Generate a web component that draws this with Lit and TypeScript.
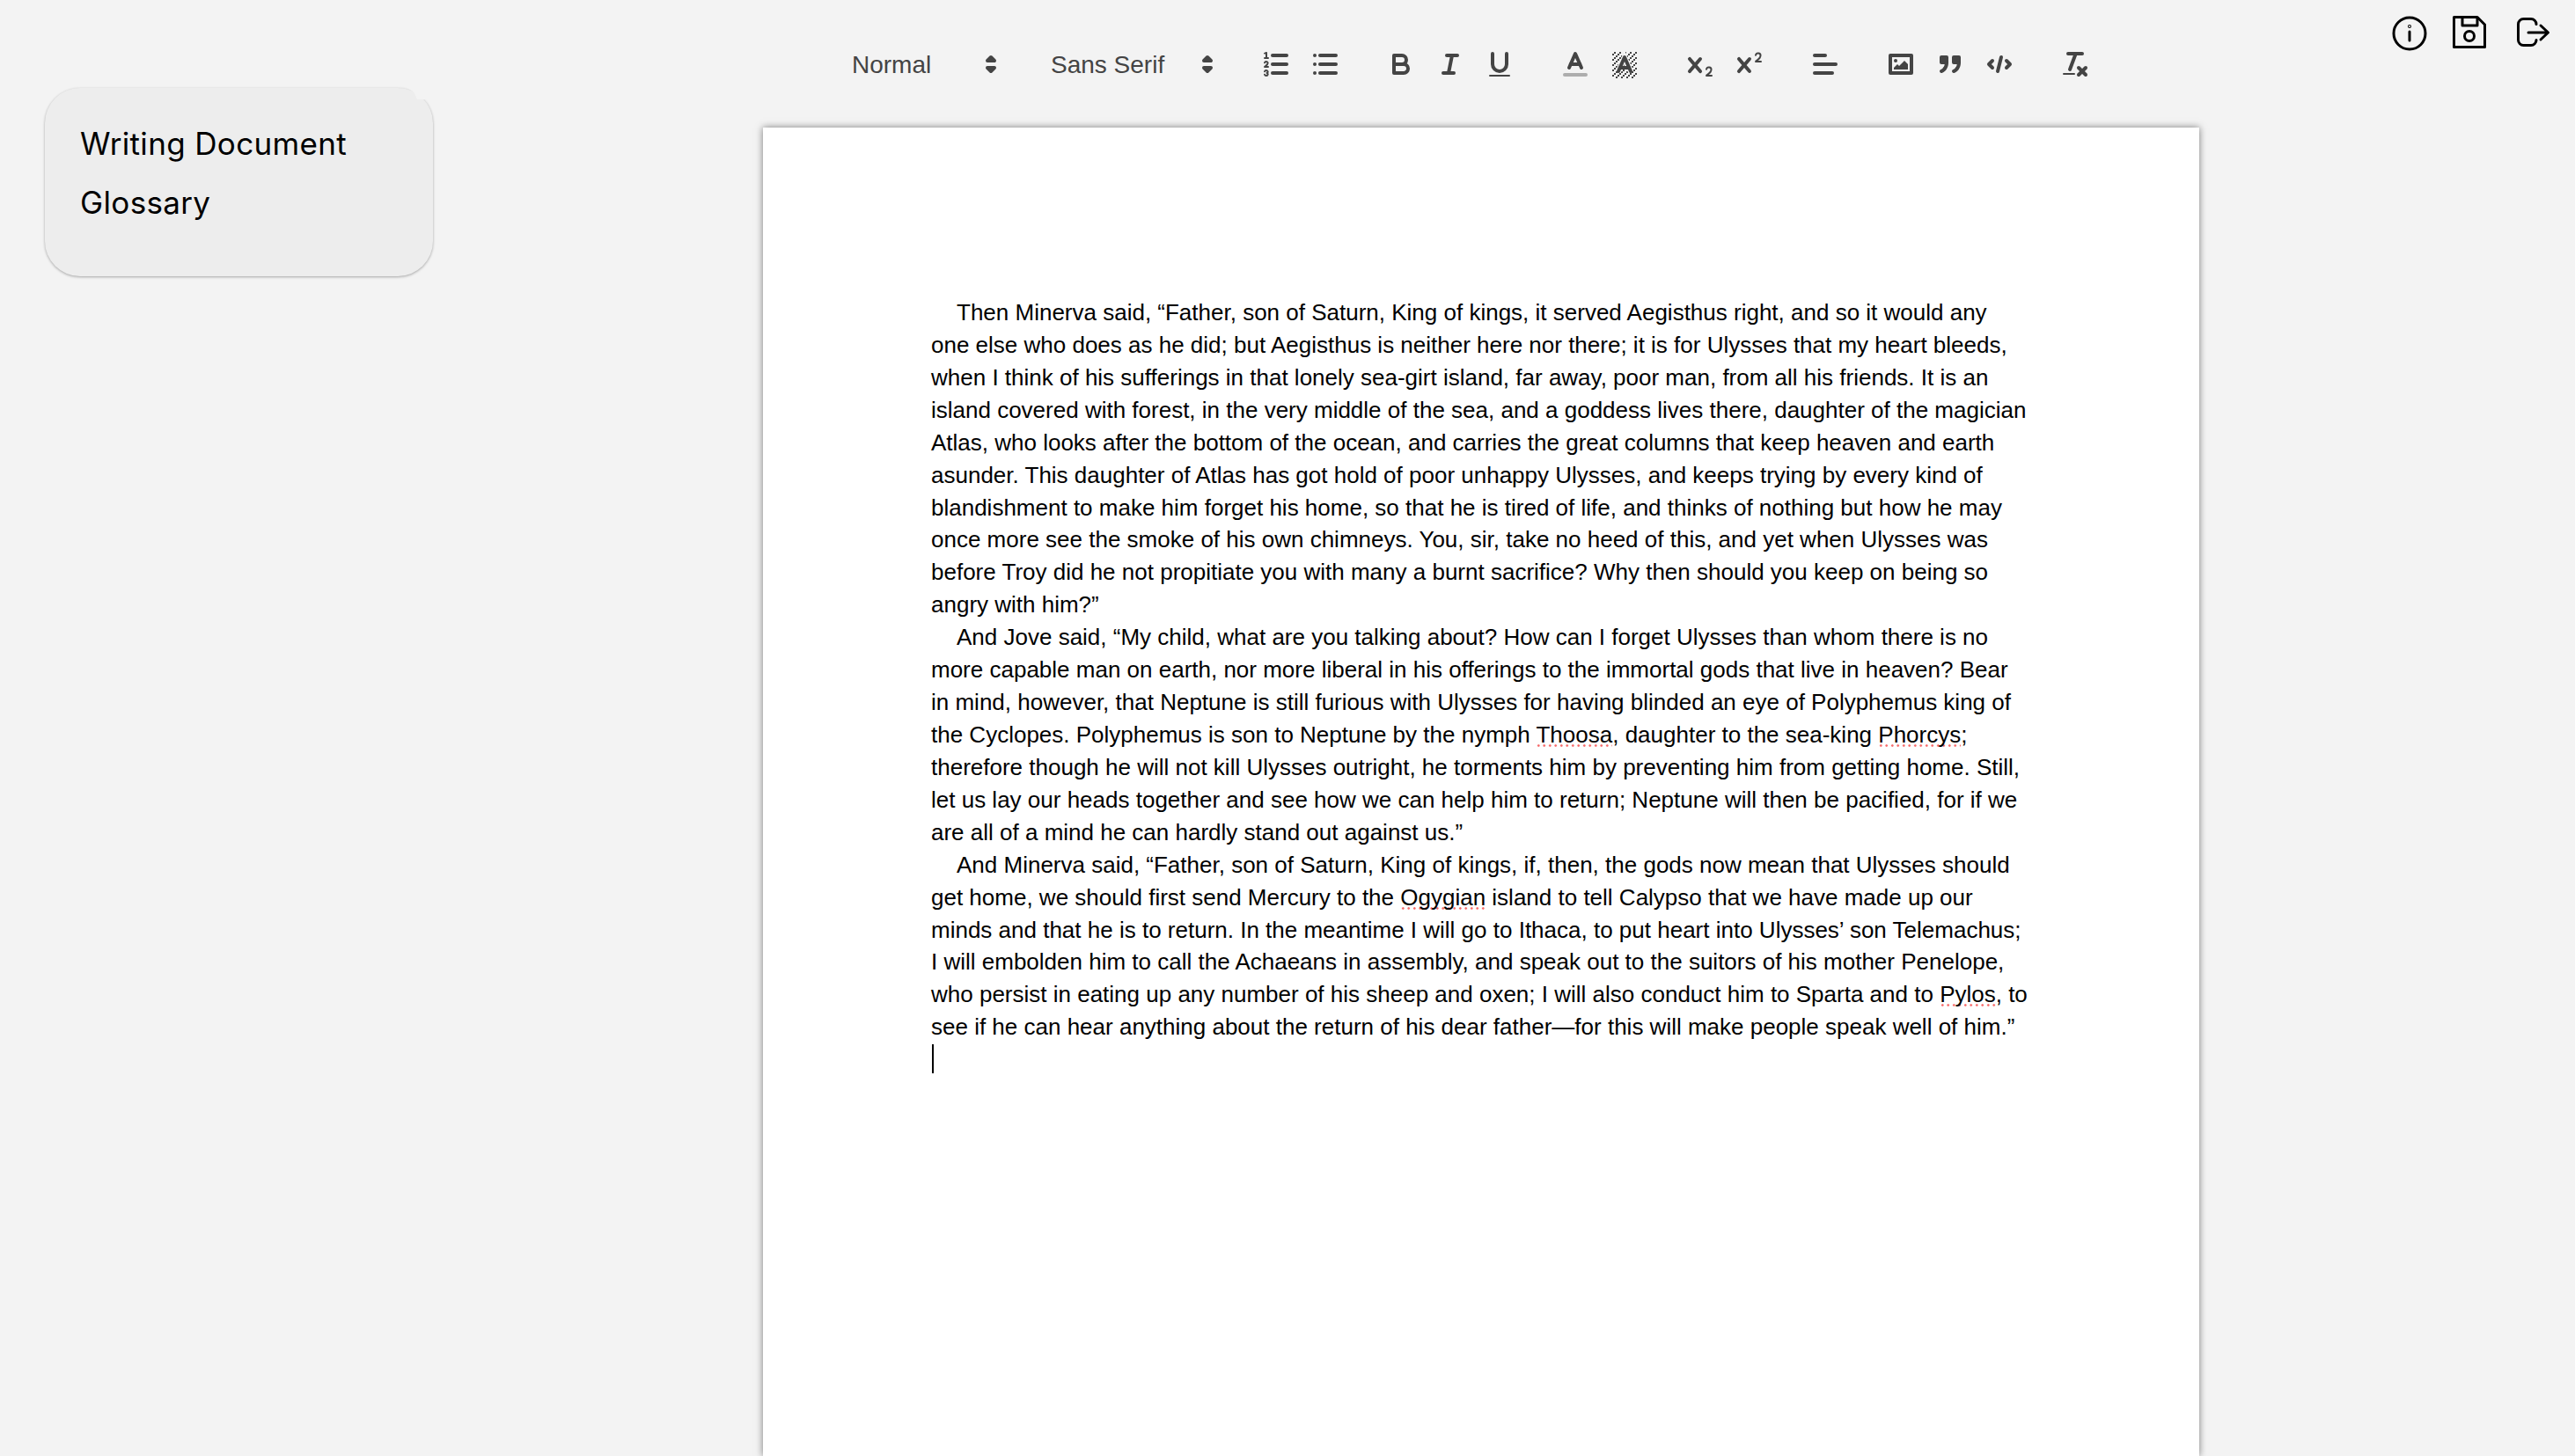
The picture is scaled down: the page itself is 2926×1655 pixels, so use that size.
import { LitElement, html, css, svg } from "lit";
import { customElement } from "lit/decorators.js";

const hatch = () => {
  const cells = [];
  for (let x = 2; x < 16; x++) for (let y = 2; y < 17; y++) {
    if ((x + y) % 3 === 2) cells.push(svg`<rect class="f" x=${x} y=${y} width="1" height="1"></rect>`);
  }
  return cells;
};

const icons: Record<string, unknown> = {
  ol: svg`<line class="s" x1="7" x2="15" y1="4" y2="4"/><line class="s" x1="7" x2="15" y1="9" y2="9"/><line class="s" x1="7" x2="15" y1="14" y2="14"/><line class="s t" x1="2.5" x2="4.5" y1="5.5" y2="5.5"/><path class="f" d="M3.5,6A0.5,0.5,0,0,1,3,5.5V3.085l-0.276.138A0.5,0.5,0,0,1,2.053,3c-0.124-.247-0.023-0.324.224-0.447l1-.5A0.5,0.5,0,0,1,4,2.5v3A0.5,0.5,0,0,1,3.5,6Z"/><path class="s t" d="M4.5,10.5h-2c0-.234,1.85-1.076,1.85-2.234A0.959,0.959,0,0,0,2.5,8.156"/><path class="s t" d="M2.5,14.846a0.959,0.959,0,0,0,1.85-.109A0.7,0.7,0,0,0,3.75,14a0.688,0.688,0,0,0,.6-0.736,0.959,0.959,0,0,0-1.85-.109"/>`,
  ul: svg`<line class="s" x1="6" x2="15" y1="4" y2="4"/><line class="s" x1="6" x2="15" y1="9" y2="9"/><line class="s" x1="6" x2="15" y1="14" y2="14"/><line class="s" x1="3" x2="3" y1="4" y2="4"/><line class="s" x1="3" x2="3" y1="9" y2="9"/><line class="s" x1="3" x2="3" y1="14" y2="14"/>`,
  bold: svg`<path class="s" d="M5,4H9.5A2.5,2.5,0,0,1,12,6.5v0A2.5,2.5,0,0,1,9.5,9H5A0,0,0,0,1,5,9V4A0,0,0,0,1,5,4Z"/><path class="s" d="M5,9h5.5A2.5,2.5,0,0,1,13,11.5v0A2.5,2.5,0,0,1,10.5,14H5a0,0,0,0,1,0,0V9A0,0,0,0,1,5,9Z"/>`,
  italic: svg`<line class="s" x1="7" x2="13" y1="4" y2="4"/><line class="s" x1="5" x2="11" y1="14" y2="14"/><line class="s" x1="8" x2="10" y1="14" y2="4"/>`,
  underline: svg`<path class="s" d="M5,3V9a4.012,4.012,0,0,0,4,4H9a4.012,4.012,0,0,0,4-4V3"/><rect class="f" height="1" rx=".5" ry=".5" width="12" x="3" y="15"/>`,
  color: svg`<line class="s" opacity=".4" x1="3" x2="15" y1="15" y2="15"/><polyline class="s" points="5.5 11 9 3 12.5 11"/><line class="s" x1="11.63" x2="6.38" y1="9" y2="9"/>`,
  background: svg`${hatch()}<polyline class="halo" points="5.5 13 9 5 12.5 13"/><polyline class="s" points="5.5 13 9 5 12.5 13"/><line class="s" x1="11.63" x2="6.38" y1="11" y2="11"/>`,
  sub: svg`<path class="f" d="M15.5,15H13.861a3.858,3.858,0,0,0,1.914-2.975,1.8,1.8,0,0,0-1.6-1.751A1.921,1.921,0,0,0,12.021,11.7a0.50013,0.50013,0,1,0,.957.291h0a0.914,0.914,0,0,1,1.053-.725,0.81,0.81,0,0,1,.744.762c0,1.076-1.16971,1.86982-1.93971,2.43082A1.45639,1.45639,0,0,0,12,15.5a0.5,0.5,0,0,0,.5.5h3A0.5,0.5,0,0,0,15.5,15Z"/><path class="f" d="M9.65,5.241a1,1,0,0,0-1.409.108L6,7.964,3.759,5.349A1,1,0,0,0,2.192,6.59178Q2.21541,6.6213,2.241,6.649L4.684,9.5,2.241,12.35A1,1,0,0,0,3.71,13.70722q0.02557-.02768.049-0.05722L6,11.036,8.241,13.65a1,1,0,1,0,1.567-1.24277Q9.78459,12.3777,9.759,12.35L7.316,9.5,9.759,6.651A1,1,0,0,0,9.65,5.241Z"/>`,
  sup: svg`<path class="f" d="M15.5,7H13.861a4.015,4.015,0,0,0,1.914-2.975,1.8,1.8,0,0,0-1.6-1.751A1.922,1.922,0,0,0,12.021,3.7a0.5,0.5,0,1,0,.957.291,0.917,0.917,0,0,1,1.053-.725,0.81,0.81,0,0,1,.744.762c0,1.077-1.164,1.925-1.934,2.486A1.423,1.423,0,0,0,12,7.5a0.5,0.5,0,0,0,.5.5h3A0.5,0.5,0,0,0,15.5,7Z"/><path class="f" d="M9.651,5.241a1,1,0,0,0-1.41.108L6,7.964,3.759,5.349a1,1,0,1,0-1.519,1.3L4.683,9.5,2.241,12.35a1,1,0,1,0,1.519,1.3L6,11.036,8.241,13.65a1,1,0,0,0,1.519-1.3L7.317,9.5,9.759,6.651A1,1,0,0,0,9.651,5.241Z"/>`,
  align: svg`<line class="s" x1="3" x2="15" y1="9" y2="9"/><line class="s" x1="3" x2="13" y1="14" y2="14"/><line class="s" x1="3" x2="9" y1="4" y2="4"/>`,
  image: svg`<rect class="s" height="10" width="12" x="3" y="4"/><circle class="f" cx="6" cy="7" r="1"/><polyline class="f" points="5 12 5 11 7 9 8 10 11 7 13 9 13 12 5 12"/>`,
  quote: svg`<rect class="s f" height="3" width="3" x="4" y="5"/><rect class="s f" height="3" width="3" x="11" y="5"/><path class="s f" d="M7,8c0,4.031-3,5-3,5"/><path class="s f" d="M14,8c0,4.031-3,5-3,5"/>`,
  code: svg`<polyline class="s" points="5 7 3 9 5 11"/><polyline class="s" points="13 7 15 9 13 11"/><line class="s" x1="10" x2="8" y1="5" y2="13"/>`,
  clean: svg`<line class="s" x1="5" x2="13" y1="3" y2="3"/><line class="s" x1="6" x2="9.35" y1="12" y2="3"/><line class="s" x1="11" x2="15" y1="11" y2="15"/><line class="s" x1="15" x2="11" y1="11" y2="15"/><rect class="f" height="1" rx=".5" ry=".5" width="7" x="2" y="14"/>`,
};

const arrows = svg`<polygon class="s" points="7 11 9 13 11 11 7 11"/><polygon class="s" points="7 7 9 5 11 7 7 7"/>`;

const groups = [["ol", "ul"], ["bold", "italic", "underline"], ["color", "background"], ["sub", "sup"], ["align"], ["image", "quote", "code"], ["clean"]];

const sq = (w: string) => html`<span class="sq">${w}</span>`;

@customElement("app-root")
export class AppRoot extends LitElement {
  static styles = css`
    :host { display: block; height: 100vh; overflow: hidden; background: #f3f3f3; }
    .app { display: grid; grid-template-columns: 867px 1632px 1fr; height: 100vh; overflow: hidden; }
    .side { padding: 100px 0 0 51px; }
    .card { position: relative; width: 441px; height: 214px; box-sizing: border-box; padding: 30px 0 0 40px; background: #ededed; border-radius: 40px; box-shadow: 0 1px 3px rgba(0,0,0,.32); font: 400 35px/67px Inter, sans-serif; color: #000; letter-spacing: .35px; }
    .card::after { content: ""; position: absolute; left: 412px; top: -2px; width: 32px; height: 18px; background: #f3f3f3; clip-path: polygon(0 2px, 5px 5px, 8px 8px, 11px 15px, 21px 15px, 32px 18px, 32px 0, 0 0); }
    .card div { height: 67px; }
    .main { display: flex; flex-direction: column; min-width: 0; }
    .toolbar { height: 145px; box-sizing: border-box; padding: 49px 0 0 85px; display: flex; align-items: flex-start; color: #444; font: 28px/50px "Liberation Sans", sans-serif; }
    .picker { position: relative; height: 48px; box-sizing: border-box; padding-left: 16px; margin-right: 30px; }
    .picker svg { position: absolute; right: 4px; top: 6px; }
    .h { width: 196px; }
    .ff { width: 216px; margin-right: 28px; }
    .grp { display: flex; margin-right: 30px; }
    .btn { width: 56px; height: 48px; padding: 6px 10px; box-sizing: border-box; }
    svg.q { width: 36px; height: 36px; display: block; }
    .s { fill: none; stroke: #444; stroke-width: 2; stroke-linecap: round; stroke-linejoin: round; }
    .s.t { stroke-width: 1; }
    .s.f, .f { fill: #444; }
    .halo { fill: none; stroke: #f3f3f3; stroke-width: 3.2; }
    .paper { flex: 1; background: #fff; box-shadow: 0 0 8px rgba(0,0,0,.5); padding: 192px 193px 0 191px; font: 26px/36.92px "Liberation Sans", sans-serif; color: #000; }
    .paper p { margin: 0; text-indent: 29px; }
    .paper p.caret { text-indent: 0; height: 37px; }
    .caret i { display: inline-block; width: 2px; height: 33px; background: #000; vertical-align: -7px; margin-left: 1px; }
    .sq { background: radial-gradient(circle at 50% 50%, #f76b6b 1.1px, transparent 1.5px) repeat-x 0 calc(100% - 1px) / 6.5px 3px; }
    .top { display: flex; justify-content: flex-end; align-items: flex-start; gap: 20px; padding: 14px 28px 0 0; }
    .top svg { width: 48px; height: 48px; display: block; fill: none; stroke: #000; stroke-width: 3; stroke-linecap: round; stroke-linejoin: round; }
    .top svg.butt { stroke-linecap: butt; }
  `;

  render() {
    return html`<div class="app">
      <aside class="side"><nav class="card"><div>Writing Document</div><div>Glossary</div></nav></aside>
      <main class="main">
        <div class="toolbar">
          <div class="picker h">Normal<svg class="q" viewBox="0 0 18 18">${arrows}</svg></div>
          <div class="picker ff">Sans Serif<svg class="q" viewBox="0 0 18 18">${arrows}</svg></div>
          ${groups.map((g) => html`<div class="grp">${g.map((n) => html`<span class="btn"><svg class="q" viewBox="0 0 18 18">${icons[n]}</svg></span>`)}</div>`)}
        </div>
        <section class="paper">
          <p>Then Minerva said, “Father, son of Saturn, King of kings, it served Aegisthus right, and so it would any one else who does as he did; but Aegisthus is neither here nor there; it is for Ulysses that my heart bleeds, when I think of his sufferings in that lonely sea-girt island, far away, poor man, from all his friends. It is an island covered with forest, in the very middle of the sea, and a goddess lives there, daughter of the magician Atlas, who looks after the bottom of the ocean, and carries the great columns that keep heaven and earth asunder. This daughter of Atlas has got hold of poor unhappy Ulysses, and keeps trying by every kind of blandishment to make him forget his home, so that he is tired of life, and thinks of nothing but how he may once more see the smoke of his own chimneys. You, sir, take no heed of this, and yet when Ulysses was before Troy did he not propitiate you with many a burnt sacrifice? Why then should you keep on being so angry with him?”</p>
          <p>And Jove said, “My child, what are you talking about? How can I forget Ulysses than whom there is no more capable man on earth, nor more liberal in his offerings to the immortal gods that live in heaven? Bear in mind, however, that Neptune is still furious with Ulysses for having blinded an eye of Polyphemus king of the Cyclopes. Polyphemus is son to Neptune by the nymph ${sq("Thoosa")}, daughter to the sea-king ${sq("Phorcys")}; therefore though he will not kill Ulysses outright, he torments him by preventing him from getting home. Still, let us lay our heads together and see how we can help him to return; Neptune will then be pacified, for if we are all of a mind he can hardly stand out against us.”</p>
          <p>And Minerva said, “Father, son of Saturn, King of kings, if, then, the gods now mean that Ulysses should get home, we should first send Mercury to the ${sq("Ogygian")} island to tell Calypso that we have made up our minds and that he is to return. In the meantime I will go to Ithaca, to put heart into Ulysses’ son Telemachus; I will embolden him to call the Achaeans in assembly, and speak out to the suitors of his mother Penelope, who persist in eating up any number of his sheep and oxen; I will also conduct him to Sparta and to ${sq("Pylos")}, to see if he can hear anything about the return of his dear father—for this will make people speak well of him.”</p>
          <p class="caret"><i></i></p>
        </section>
      </main>
      <div class="top">
        <svg viewBox="0 0 48 48"><circle cx="24" cy="24" r="18"/><line x1="24" y1="22" x2="24" y2="32"/><circle cx="24" cy="16" r=".5"/></svg>
        <svg class="butt" viewBox="0 0 48 48"><path d="M6.5 5.5H33L41.5 14V39.5H6.5Z"/><path d="M16 5.5V15H33V5.5"/><circle cx="24" cy="27" r="5.5"/></svg>
        <svg viewBox="0 0 48 48"><path d="M32 13V13.5a6 6 0 0 0-6-6H17.5a6 6 0 0 0-6 6V31.5a6 6 0 0 0 6 6H26a6 6 0 0 0 6-6V32"/><path d="M23 23H45M37 15L45.5 23L37 31"/></svg>
      </div>
    </div>`;
  }
}
